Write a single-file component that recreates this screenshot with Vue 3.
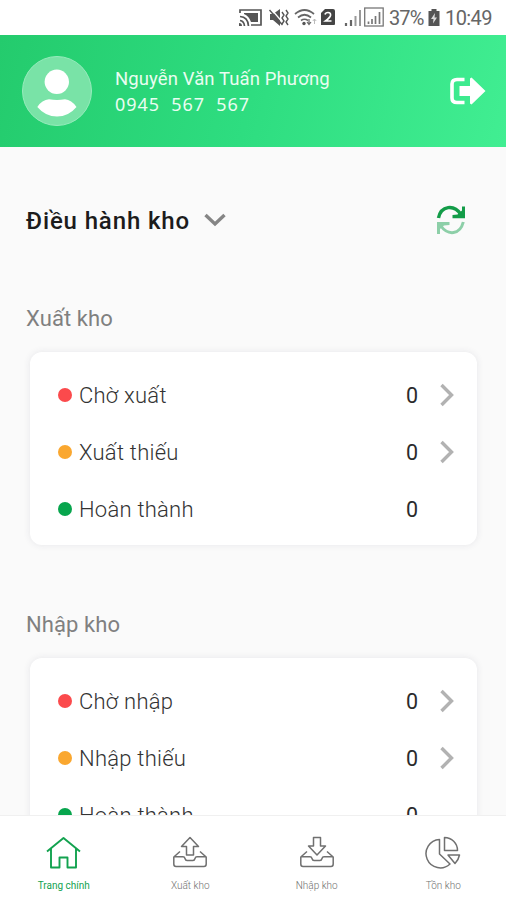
<script setup>
const sections = [
  { title: 'Xuất kho', rows: [
    { label: 'Chờ xuất', tone: 'red', count: 0, link: true },
    { label: 'Xuất thiếu', tone: 'orange', count: 0, link: true },
    { label: 'Hoàn thành', tone: 'green', count: 0, link: false }
  ] },
  { title: 'Nhập kho', rows: [
    { label: 'Chờ nhập', tone: 'red', count: 0, link: true },
    { label: 'Nhập thiếu', tone: 'orange', count: 0, link: true },
    { label: 'Hoàn thành', tone: 'green', count: 0, link: false }
  ] }
]
const tray = 'M8 15.500 L1.800 21 V28 Q1.800 30.500 4 30.500 H32 Q34.200 30.500 34.200 28 V21 L28 15.500 M1.800 20.800 H11 Q12.500 20.800 13 22.500 Q13.500 24.500 15 24.500 H21 Q22.500 24.500 23 22.500 Q23.500 20.800 25 20.800 H34.200'
const tabs = [
  { label: 'Trang chính', active: true, paths: ['M1 15.500 L17.500 2 L34 15.500 M5 12.500 V31.500 H13.500 V21.500 H21.500 V31.500 H30 V12.500'] },
  { label: 'Xuất kho', paths: [tray, 'M18 1.500 L26.500 10.500 H21.500 V19 H14.500 V10.500 H9.500 Z'] },
  { label: 'Nhập kho', paths: [tray, 'M14.500 1.500 H21.500 V10 H26.500 L18 19 L9.500 10 H14.500 Z'] },
  { label: 'Tồn kho', paths: [
    'M14.500 3.500 A14.200 14.200 0 1 0 25 28 L14.500 18 Z',
    'M19.500 1.500 A13 13 0 0 1 32.500 14.500 H19.500 Z',
    'M23 19 H34.500 Q33.500 24 30 27.500 Z'
  ] }
]
</script>

<template>
  <div class="screen">
    <div class="status">
      <svg class="status-icons" width="148" height="22" viewBox="238 6 148 22">
        <g fill="none" stroke="#555" stroke-width="1.700">
          <path d="M240 13 V10 H261 V25 H251" />
          <path d="M240 16.500 Q248 17 248.500 26 M240 20.500 Q244 21 244.500 26" />
        </g>
        <path fill="#555" d="M244 13 H258 V22 H251 Q249 16 244 14 Z M239 23 Q242 23 242 26 H239 Z" />
        <path fill="#555" d="M270 14 H273 L280 9 V26 L273 20 H270 Z" />
        <path d="M271.500 9.500 L284 24" stroke="#fff" stroke-width="1.300" />
        <path d="M269.500 10 L282.500 25 M282 12 L284 15 L282 18 L284 21 L282 24 M286 10 L288 13 L286 16 L288 19 L286 22 L288 25" fill="none" stroke="#555" stroke-width="1.400" />
        <g fill="none" stroke="#666" stroke-width="1.700">
          <path d="M295 14 Q304.500 6 314 14 M298 17.500 Q304.500 12 311 17.500 M301 20.500 Q304.500 18 308 20.500" />
        </g>
        <circle cx="304" cy="23.500" r="1.700" fill="#555" />
        <path d="M309 19 V24 M307 22 L309 24.500 L311 22" fill="none" stroke="#666" stroke-width="1.200" />
        <path d="M314.500 24 V19 M312.800 21 L314.500 19 L316.200 21" fill="none" stroke="#bbb" stroke-width="1" />
        <path fill="#444" d="M321 13 L325 9 H333 Q335 9 335 11 V24 Q335 25 334 25 H321 Z" />
        <path d="M325 14.500 Q325.500 12.500 328 12.500 Q331 12.500 330.500 15.500 Q330 17.500 325.500 21 H331.500" fill="none" stroke="#fff" stroke-width="1.700" />
        <path d="M346 23 V26 M351 20 V26" stroke="#666" stroke-width="2.200" />
        <path d="M355.500 16 V26 M360 10 V26" stroke="#999" stroke-width="2" />
        <rect x="364.700" y="8" width="18.500" height="18" fill="none" stroke="#777" stroke-width="1.300" />
        <path d="M368.500 21.500 V24 M372 19 V24 M375.500 16 V24 M379.500 12 V24" stroke="#777" stroke-width="1.700" />
      </svg>
      <span class="percent">37%</span>
      <svg class="battery" width="12" height="19" viewBox="0 0 12 19">
        <path d="M3.500 1 H8.500 V3 H11.500 V18 H0.500 V3 H3.500 Z" fill="#555" />
        <path d="M7 5 L3 11 H5.500 L5 15.500 L9 9.500 H6.500 Z" fill="#ddd" />
      </svg>
      <span class="clock">10:49</span>
    </div>

    <header class="profile">
      <svg class="avatar" width="70" height="70" viewBox="0 0 70 70">
        <circle cx="35" cy="35" r="34.500" fill="#79e3a7" stroke="#98ebbd" />
        <circle cx="34.800" cy="25.800" r="12.200" fill="#fff" />
        <path d="M15.300 51 Q20 43.800 27 43.300 Q35 44.800 43 43.300 Q49.500 43.800 54.500 51 Q46.500 60.600 35 60.600 Q23.500 60.600 15.300 51 Z" fill="#fff" />
      </svg>
      <div class="identity">
        <div class="name">Nguyễn Văn Tuấn Phương</div>
        <div class="phone">0945&nbsp; 567&nbsp; 567</div>
      </div>
      <svg class="logout" width="36" height="28" viewBox="0 0 36 28">
        <path d="M14.500 2.500 H7 Q2 2.500 2 7 V21 Q2 25.500 7 25.500 H14.500" fill="none" stroke="#fff" stroke-width="3.600" />
        <path d="M9.500 9 H20 V1.500 L21.500 0.500 L35.500 14 L21.500 27.500 L20 26.500 V19 H9.500 Z" fill="#fff" />
      </svg>
    </header>

    <main class="content">
      <div class="heading">
        <h1>Điều hành kho</h1>
        <svg class="down" width="22" height="14" viewBox="0 0 22 14">
          <path d="M1.500 2 L11 11 L20.500 2" fill="none" stroke="#858585" stroke-width="3.400" />
        </svg>
        <svg class="refresh" width="30" height="30" viewBox="0 0 30 30">
          <path d="M2.500 13 C5 0.500 18 -1 25 9.500" fill="none" stroke="#139c48" stroke-width="3.500" />
          <path d="M16.500 13.200 V10 L21.500 9.500 L26 5.500 V1.500 H29 V13.200 Z" fill="#139c48" />
          <path d="M27.300 17 C24 30 12 31 4.500 20.500" fill="none" stroke="#8dcfa8" stroke-width="3" />
          <path d="M13.500 17 V20 L8 20.500 L4 24 V29 H1 V17 Z" fill="#8dcfa8" />
        </svg>
      </div>

      <section v-for="section in sections" :key="section.title" class="section">
        <h2>{{ section.title }}</h2>
        <div class="card">
          <div v-for="row in section.rows" :key="row.label" class="row">
            <span class="dot" :class="row.tone"></span>
            <span class="label">{{ row.label }}</span>
            <span class="count">{{ row.count }}</span>
            <span class="go">
              <svg v-if="row.link" width="14" height="24" viewBox="0 0 14 24">
                <path d="M1.500 2 L11.500 12 L1.500 22" fill="none" stroke="#b2b2b2" stroke-width="3.400" />
              </svg>
            </span>
          </div>
        </div>
      </section>
    </main>

    <nav class="tabs">
      <div v-for="tab in tabs" :key="tab.label" class="tab" :class="{ active: tab.active }">
        <svg width="36" height="34" viewBox="0 0 36 34">
          <path v-for="d in tab.paths" :key="d" :d="d" fill="none" stroke="currentColor" :stroke-width="tab.active ? 1.9 : 1.5" stroke-linejoin="round" />
        </svg>
        <span>{{ tab.label }}</span>
      </div>
    </nav>
  </div>
</template>

<style>
body { margin: 0; overflow: hidden; }
</style>

<style scoped>
.screen {
  width: 506px;
  height: 900px;
  display: flex;
  flex-direction: column;
  overflow: hidden;
  background: #fafafa;
  font-family: Roboto, "Noto Sans", sans-serif;
}
.status {
  flex: none;
  height: 35px;
  box-sizing: border-box;
  padding: 0 14px 1px 238px;
  display: flex;
  align-items: center;
  background: #fff;
  color: #666;
  font-size: 20px;
  white-space: nowrap;
}
.status-icons { flex: none; }
.percent { width: 35px; margin-left: 3px; letter-spacing: -0.9px; padding-top: 2px; }
.battery { flex: none; margin-left: 4px; }
.clock { margin-left: 5px; letter-spacing: -0.6px; padding-top: 2px; }
.profile {
  flex: none;
  height: 112px;
  box-sizing: border-box;
  padding: 0 20px 0 22px;
  display: flex;
  align-items: center;
  background: linear-gradient(105deg, #24cb6d 0%, #2edd80 50%, #41ee92 100%);
  color: #e9fdf1;
}
.identity { margin-left: 23px; flex: 1; padding-top: 2px; white-space: nowrap; }
.name { font-size: 18.5px; line-height: 25px; letter-spacing: 0.1px; }
.phone { font-family: "Noto Sans", sans-serif; font-size: 18px; line-height: 25px; letter-spacing: 0.95px; }
.content { flex: 1; min-height: 0; overflow: hidden; padding: 0 29px 0 26px; }
.heading { height: 146px; display: flex; align-items: center; }
h1 { margin: 1px 0 0; font-size: 24px; line-height: 30px; font-weight: 500; letter-spacing: 0.87px; color: #1c1c1c; white-space: nowrap; }
.down { margin-left: 14px; }
.refresh { margin-left: auto; margin-right: 11px; }
h2 { margin: 0; padding-top: 9px; box-sizing: border-box; height: 59px; font-size: 22px; line-height: 34px; font-weight: 400; letter-spacing: 0.1px; color: #808080; }
.card {
  margin: 0 0 54px 4px;
  height: 193px;
  box-sizing: border-box;
  padding: 14px 23px 0 28px;
  border-radius: 12px;
  background: #fff;
  box-shadow: 0 0 7px rgba(60, 60, 90, 0.1);
}
.row { height: 57px; display: flex; align-items: center; font-size: 22px; color: #333; }
.dot { width: 14px; height: 14px; border-radius: 50%; margin-right: 7px; }
.red { background: #fb4a4c; }
.orange { background: #faa72f; }
.green { background: #07a54d; }
.label { flex: 1; padding-top: 1px; font-weight: 300; letter-spacing: 0.25px; }
.count { padding-top: 1px; font-size: 21.5px; font-weight: 400; color: #2b2b2b; }
.go { width: 14px; height: 24px; margin-left: 22px; }
.go svg { display: block; }
.tabs {
  flex: none;
  height: 85px;
  box-sizing: border-box;
  border-top: 1px solid #f0f0f0;
  display: grid;
  grid-template-columns: repeat(4, 1fr);
  background: #fff;
}
.tab { display: flex; flex-direction: column; align-items: center; padding: 20px 0 0 1px; color: #707070; }
.tab span { margin-top: 8px; font-size: 10px; line-height: 16px; font-weight: 300; white-space: nowrap; }
.tab.active { color: #12a24f; }
.tab.active span { font-weight: 400; }
</style>
